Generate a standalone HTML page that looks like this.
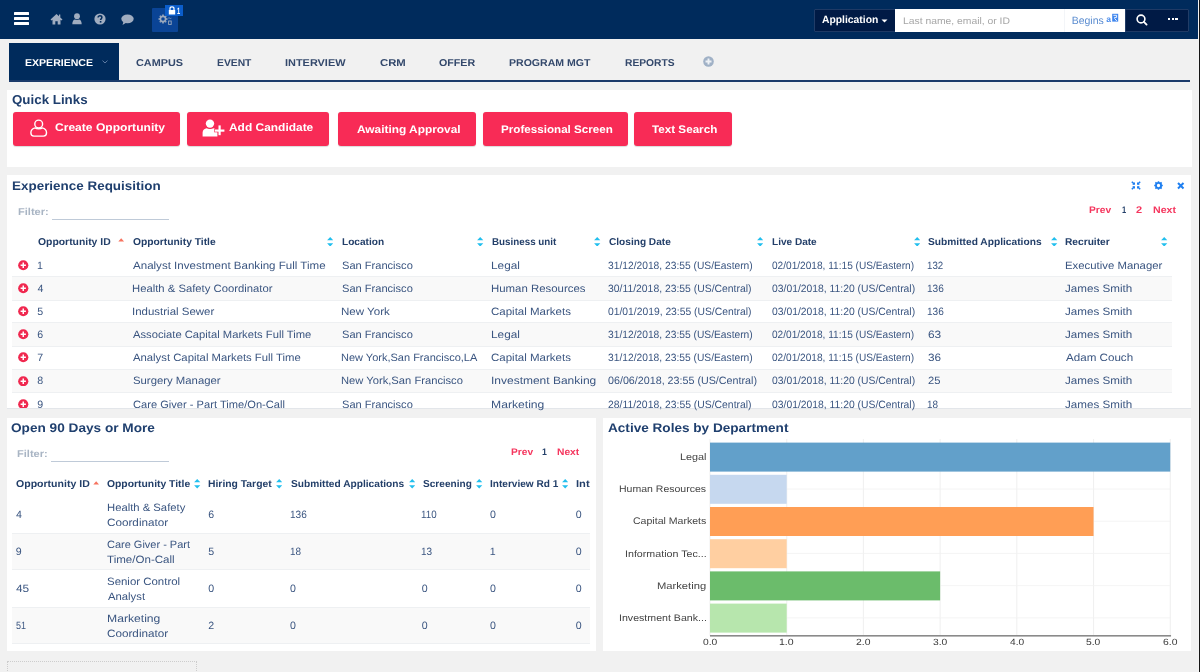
<!DOCTYPE html><html><head><meta charset="utf-8"><style>html,body{margin:0;padding:0;width:1200px;height:672px;overflow:hidden;background:#f1f1f1;text-rendering:geometricPrecision;font-family:"Liberation Sans", sans-serif;}</style></head><body><div style="position:absolute;left:0;top:0;width:1200px;height:672px;overflow:hidden;will-change:transform"><div style="position:absolute;left:0;top:0;width:1200px;height:39px;background:#002b5c"></div><div style="position:absolute;left:14px;top:12px;width:15px;height:2.7px;background:#fff;border-radius:0.5px"></div><div style="position:absolute;left:14px;top:17.2px;width:15px;height:2.7px;background:#fff;border-radius:0.5px"></div><div style="position:absolute;left:14px;top:22.3px;width:15px;height:2.7px;background:#fff;border-radius:0.5px"></div><svg style="position:absolute;left:50px;top:13px" width="13" height="12" viewBox="0 0 13 12">
<path d="M6.5 1 L0.5 6.6 L1.6 7.6 L2.5 6.8 V11.5 H5.3 V8.3 H7.7 V11.5 H10.5 V6.8 L11.4 7.6 L12.5 6.6 L10.3 4.5 V1.4 H9 V3.3 Z" fill="#a0adc0"/></svg><svg style="position:absolute;left:72px;top:13px" width="10" height="12" viewBox="0 0 10 12">
<circle cx="5" cy="3.2" r="2.9" fill="#a0adc0"/><path d="M0.3 11.3 C0.3 7.8 1.6 6.6 3 6.4 C3.8 7 6.2 7 7 6.4 C8.4 6.6 9.7 7.8 9.7 11.3 Z" fill="#a0adc0"/></svg><svg style="position:absolute;left:94px;top:13px" width="12" height="12" viewBox="0 0 12 12">
<circle cx="6" cy="6" r="5.6" fill="#a0adc0"/>
<path d="M4.1 4.6 C4.1 3.4 5 2.8 6 2.8 C7.1 2.8 7.9 3.5 7.9 4.5 C7.9 5.6 6.6 5.8 6.6 6.9" stroke="#002b5c" stroke-width="1.5" fill="none"/>
<rect x="5.8" y="8" width="1.6" height="1.6" fill="#002b5c"/></svg><svg style="position:absolute;left:121px;top:14px" width="13" height="12" viewBox="0 0 13 12">
<ellipse cx="6.5" cy="4.8" rx="6.2" ry="4.4" fill="#a0adc0"/><path d="M2.5 7.5 L1.5 11 L5.5 8.6 Z" fill="#a0adc0"/></svg><div style="position:absolute;left:152px;top:8px;width:26px;height:23.5px;background:#0a4496;border-radius:1px"></div><svg style="position:absolute;left:158px;top:13px" width="16" height="13" viewBox="0 0 16 13">
<g fill="none" stroke="#9aa8bd" stroke-width="1.6"><circle cx="5" cy="6" r="2.6"/></g>
<g stroke="#9aa8bd" stroke-width="1.6"><path d="M5 1.5V3 M5 9V10.5 M0.5 6H2 M8 6H9.5 M1.8 2.8L2.8 3.8 M7.2 8.2L8.2 9.2 M8.2 2.8L7.2 3.8 M2.8 8.2L1.8 9.2"/></g>
<rect x="10.6" y="8" width="2.6" height="3.4" fill="none" stroke="#9aa8bd" stroke-width="0.9"/><path d="M10.2 5.2 Q11 4.5 11.8 5.2 T13.4 5.2" stroke="#9aa8bd" stroke-width="0.7" fill="none"/>
</svg><div style="position:absolute;left:165px;top:5px;width:17.5px;height:11px;background:#0b5dca"></div><svg style="position:absolute;left:168px;top:5.5px" width="8" height="9" viewBox="0 0 8 9">
<path d="M2 4 V2.6 C2 1.4 2.8 0.8 4 0.8 C5.2 0.8 6 1.4 6 2.6 V4" stroke="#fff" stroke-width="1.2" fill="none"/>
<rect x="0.8" y="4" width="6.4" height="4.5" fill="#fff"/></svg><div style="position:absolute;left:814px;top:9px;width:82px;height:22.5px;background:#001a45;border-radius:2px 0 0 2px;box-shadow:inset 0 0 0 0.8px #2a4670"></div><div style="position:absolute;left:895px;top:9px;width:230px;height:22.5px;background:#fff"></div><div style="position:absolute;left:1063.5px;top:9px;width:0.7px;height:22.5px;background:#f3f5f8"></div><div style="position:absolute;left:1125px;top:9px;width:63.5px;height:22.5px;background:#001a45;border-radius:0 2px 2px 0;box-shadow:inset 0 0 0 0.8px #2a4670"></div><svg style="position:absolute;left:880.5px;top:18.5px" width="7" height="4" viewBox="0 0 7 4"><path d="M0.5 0.5 H6.5 L3.5 3.6 Z" fill="#fff"/></svg><svg style="position:absolute;left:1105.5px;top:13px" width="13" height="10" viewBox="0 0 13 10">
<text x="0.2" y="8.6" font-family="Liberation Sans" font-size="8.6" font-weight="700" fill="#4f8fec">a</text>
<rect x="6.2" y="0.8" width="6" height="7.8" fill="#3f86ee"/>
<path d="M7.4 2.3 H10.6 V4.4 H8.2 M8.4 5.2 L10.8 8" stroke="#fff" stroke-width="0.9" fill="none"/></svg><svg style="position:absolute;left:1135.5px;top:13.5px" width="12" height="12" viewBox="0 0 12 12">
<circle cx="5" cy="5" r="3.9" stroke="#fff" stroke-width="1.6" fill="none"/><path d="M7.9 7.9 L10.6 10.6" stroke="#fff" stroke-width="1.8" stroke-linecap="round"/></svg><div style="position:absolute;left:1168.0px;top:18.3px;width:2.4px;height:2px;background:#fff"></div><div style="position:absolute;left:1171.6px;top:18.3px;width:2.4px;height:2px;background:#fff"></div><div style="position:absolute;left:1175.2px;top:18.3px;width:2.4px;height:2px;background:#fff"></div><div style="position:absolute;left:0;top:39px;width:1198px;height:633px;background:#f1f1f1"></div><div style="position:absolute;left:1198.3px;top:0;width:0.7px;height:672px;background:#f4f4f4"></div><div style="position:absolute;left:1199px;top:0;width:1px;height:672px;background:#161616"></div><div style="position:absolute;left:8.5px;top:43px;width:110.5px;height:38.5px;background:#002b5c"></div><div style="position:absolute;left:8.5px;top:79.6px;width:1181.5px;height:2.4px;background:#1b3a6a"></div><svg style="position:absolute;left:101.5px;top:60px" width="6" height="4" viewBox="0 0 6 4"><path d="M0.5 0.6 L3 3 L5.5 0.6" stroke="#6a86ad" stroke-width="0.9" fill="none"/></svg><svg style="position:absolute;left:702.7px;top:56.2px" width="11" height="11" viewBox="0 0 11 11">
<circle cx="5.5" cy="5.5" r="5.3" fill="#a0b1c6"/><path d="M5.5 2.5V8.5 M2.5 5.5H8.5" stroke="#eef1f5" stroke-width="1.9"/></svg><div style="position:absolute;left:6.7px;top:90px;width:1185px;height:77.3px;background:#fff"></div><div style="position:absolute;left:13.2px;top:111.8px;width:167.20000000000002px;height:34.6px;background:#f82b56;border-radius:3px;box-shadow:0 0.5px 1px rgba(0,0,0,0.15)"></div><div style="position:absolute;left:187px;top:111.8px;width:142.3px;height:34.6px;background:#f82b56;border-radius:3px;box-shadow:0 0.5px 1px rgba(0,0,0,0.15)"></div><div style="position:absolute;left:338px;top:111.8px;width:138.3px;height:34.6px;background:#f82b56;border-radius:3px;box-shadow:0 0.5px 1px rgba(0,0,0,0.15)"></div><div style="position:absolute;left:483px;top:111.8px;width:144.5px;height:34.6px;background:#f82b56;border-radius:3px;box-shadow:0 0.5px 1px rgba(0,0,0,0.15)"></div><div style="position:absolute;left:634.3px;top:111.8px;width:98.20000000000005px;height:34.6px;background:#f82b56;border-radius:3px;box-shadow:0 0.5px 1px rgba(0,0,0,0.15)"></div><svg style="position:absolute;left:30px;top:118.5px" width="18" height="18" viewBox="0 0 18 18">
<circle cx="8.7" cy="5" r="3.9" stroke="#fff" stroke-width="1.4" fill="none"/>
<path d="M5.2 8.9 C3 9.4 0.9 10.9 0.9 13.6 V14.1 C0.9 15.9 2.1 17.1 3.9 17.1 H13.5 C15.3 17.1 16.5 15.9 16.5 14.1 V13.6 C16.5 10.9 14.4 9.4 12.2 8.9 C10.9 10 6.5 10 5.2 8.9 Z" stroke="#fff" stroke-width="1.4" fill="none" stroke-linejoin="round"/></svg><svg style="position:absolute;left:202px;top:118.5px" width="24" height="18" viewBox="0 0 24 18">
<circle cx="8" cy="4.6" r="4.2" fill="#fff"/>
<path d="M0.6 17.6 V13.6 C0.6 10.8 2.8 9.6 4.6 9.2 C6 10.2 10 10.2 11.4 9.2 C13.2 9.6 15.4 10.8 15.4 13.6 V17.6 Z" fill="#fff"/>
<rect x="12.2" y="9.9" width="10.6" height="3.4" fill="#f82b56"/>
<rect x="12.8" y="10.5" width="9.6" height="2.2" fill="#fff"/>
<rect x="16.5" y="6.4" width="2.2" height="9.8" fill="#fff"/>
</svg><div style="position:absolute;left:6.7px;top:175px;width:1184.5px;height:234.2px;background:#fff;overflow:hidden" id="c1"></div><div style="position:absolute;left:51.7px;top:218.6px;width:117.7px;height:0.9px;background:#bfcad8"></div><svg style="position:absolute;left:1131px;top:181px" width="10" height="9" viewBox="0 0 10 9">
<g stroke="#1f7ff0" stroke-width="1.5" fill="none"><path d="M0.8 0.8 L3.3 3.1 M9.2 0.8 L6.7 3.1 M0.8 8.2 L3.3 5.9 M9.2 8.2 L6.7 5.9"/></g>
<g fill="#1f7ff0"><path d="M1.2 3.8 H4 V1 Z M8.8 3.8 H6 V1 Z M1.2 5.2 H4 V8 Z M8.8 5.2 H6 V8 Z"/></g></svg><svg style="position:absolute;left:1154px;top:181px" width="9" height="9" viewBox="0 0 9 9">
<circle cx="4.5" cy="4.5" r="2.6" stroke="#1f7ff0" stroke-width="1.9" fill="none"/>
<g stroke="#1f7ff0" stroke-width="1.5"><path d="M4.5 0.2V2 M4.5 7V8.8 M0.2 4.5H2 M7 4.5H8.8 M1.4 1.4L2.6 2.6 M6.4 6.4L7.6 7.6 M7.6 1.4L6.4 2.6 M2.6 6.4L1.4 7.6"/></g></svg><svg style="position:absolute;left:1177px;top:182px" width="7.5" height="7.5" viewBox="0 0 7.5 7.5">
<path d="M1 1 L6.5 6.5 M6.5 1 L1 6.5" stroke="#1f7ff0" stroke-width="2"/></svg><svg style="position:absolute;left:118.2px;top:237.6px" width="6.4" height="4" viewBox="0 0 6.4 4">
<path d="M0.3 3.6 L3.2 0.3 L6.1 3.6 Z" fill="#f7735f"/></svg><svg style="position:absolute;left:327px;top:236.9px" width="6.4" height="9.4" viewBox="0 0 6.4 9.4">
<path d="M0.1 3.3 L3.2 0 L6.3 3.3 Z M0.1 6.3 L3.2 9.6 L6.3 6.3 Z" fill="#22bfee"/></svg><svg style="position:absolute;left:477.2px;top:236.9px" width="6.4" height="9.4" viewBox="0 0 6.4 9.4">
<path d="M0.1 3.3 L3.2 0 L6.3 3.3 Z M0.1 6.3 L3.2 9.6 L6.3 6.3 Z" fill="#22bfee"/></svg><svg style="position:absolute;left:594.3px;top:236.9px" width="6.4" height="9.4" viewBox="0 0 6.4 9.4">
<path d="M0.1 3.3 L3.2 0 L6.3 3.3 Z M0.1 6.3 L3.2 9.6 L6.3 6.3 Z" fill="#22bfee"/></svg><svg style="position:absolute;left:757px;top:236.9px" width="6.4" height="9.4" viewBox="0 0 6.4 9.4">
<path d="M0.1 3.3 L3.2 0 L6.3 3.3 Z M0.1 6.3 L3.2 9.6 L6.3 6.3 Z" fill="#22bfee"/></svg><svg style="position:absolute;left:913.5px;top:236.9px" width="6.4" height="9.4" viewBox="0 0 6.4 9.4">
<path d="M0.1 3.3 L3.2 0 L6.3 3.3 Z M0.1 6.3 L3.2 9.6 L6.3 6.3 Z" fill="#22bfee"/></svg><svg style="position:absolute;left:1051.2px;top:236.9px" width="6.4" height="9.4" viewBox="0 0 6.4 9.4">
<path d="M0.1 3.3 L3.2 0 L6.3 3.3 Z M0.1 6.3 L3.2 9.6 L6.3 6.3 Z" fill="#22bfee"/></svg><svg style="position:absolute;left:1161.3px;top:236.9px" width="6.4" height="9.4" viewBox="0 0 6.4 9.4">
<path d="M0.1 3.3 L3.2 0 L6.3 3.3 Z M0.1 6.3 L3.2 9.6 L6.3 6.3 Z" fill="#22bfee"/></svg><svg style="position:absolute;left:18px;top:260.0px" width="10.5" height="10.5" viewBox="0 0 10.5 10.5">
<circle cx="5.25" cy="5.25" r="5.1" fill="#f0284f"/><path d="M5.25 2.6V7.9 M2.6 5.25H7.9" stroke="#fff" stroke-width="1.45"/></svg><div style="position:absolute;left:12px;top:276.2px;width:1160px;height:24.6px;background:#f9f9f9;border-top:1px solid #eef0f2;border-bottom:1px solid #eef0f2;box-sizing:border-box"></div><svg style="position:absolute;left:18px;top:283.1px" width="10.5" height="10.5" viewBox="0 0 10.5 10.5">
<circle cx="5.25" cy="5.25" r="5.1" fill="#f0284f"/><path d="M5.25 2.6V7.9 M2.6 5.25H7.9" stroke="#fff" stroke-width="1.45"/></svg><svg style="position:absolute;left:18px;top:306.2px" width="10.5" height="10.5" viewBox="0 0 10.5 10.5">
<circle cx="5.25" cy="5.25" r="5.1" fill="#f0284f"/><path d="M5.25 2.6V7.9 M2.6 5.25H7.9" stroke="#fff" stroke-width="1.45"/></svg><div style="position:absolute;left:12px;top:322.4px;width:1160px;height:24.6px;background:#f9f9f9;border-top:1px solid #eef0f2;border-bottom:1px solid #eef0f2;box-sizing:border-box"></div><svg style="position:absolute;left:18px;top:329.3px" width="10.5" height="10.5" viewBox="0 0 10.5 10.5">
<circle cx="5.25" cy="5.25" r="5.1" fill="#f0284f"/><path d="M5.25 2.6V7.9 M2.6 5.25H7.9" stroke="#fff" stroke-width="1.45"/></svg><svg style="position:absolute;left:18px;top:352.40000000000003px" width="10.5" height="10.5" viewBox="0 0 10.5 10.5">
<circle cx="5.25" cy="5.25" r="5.1" fill="#f0284f"/><path d="M5.25 2.6V7.9 M2.6 5.25H7.9" stroke="#fff" stroke-width="1.45"/></svg><div style="position:absolute;left:12px;top:368.6px;width:1160px;height:24.6px;background:#f9f9f9;border-top:1px solid #eef0f2;border-bottom:1px solid #eef0f2;box-sizing:border-box"></div><svg style="position:absolute;left:18px;top:375.5px" width="10.5" height="10.5" viewBox="0 0 10.5 10.5">
<circle cx="5.25" cy="5.25" r="5.1" fill="#f0284f"/><path d="M5.25 2.6V7.9 M2.6 5.25H7.9" stroke="#fff" stroke-width="1.45"/></svg><svg style="position:absolute;left:18px;top:398.6px" width="10.5" height="10.5" viewBox="0 0 10.5 10.5">
<circle cx="5.25" cy="5.25" r="5.1" fill="#f0284f"/><path d="M5.25 2.6V7.9 M2.6 5.25H7.9" stroke="#fff" stroke-width="1.45"/></svg><div style="position:absolute;left:0;top:409.2px;width:1198px;height:8.7px;background:#f1f1f1"></div><div style="position:absolute;left:6.7px;top:408.4px;width:1184.5px;height:0.8px;background:#e3e6ea"></div><div style="position:absolute;left:6.7px;top:418px;width:589.3px;height:232.7px;background:#fff"></div><div style="position:absolute;left:51.3px;top:461.3px;width:118px;height:0.9px;background:#bfcad8"></div><svg style="position:absolute;left:93px;top:481px" width="6.4" height="4" viewBox="0 0 6.4 4">
<path d="M0.3 3.6 L3.2 0.3 L6.1 3.6 Z" fill="#f7735f"/></svg><svg style="position:absolute;left:194.4px;top:479.3px" width="6.4" height="9.4" viewBox="0 0 6.4 9.4">
<path d="M0.1 3.3 L3.2 0 L6.3 3.3 Z M0.1 6.3 L3.2 9.6 L6.3 6.3 Z" fill="#22bfee"/></svg><svg style="position:absolute;left:276px;top:479.3px" width="6.4" height="9.4" viewBox="0 0 6.4 9.4">
<path d="M0.1 3.3 L3.2 0 L6.3 3.3 Z M0.1 6.3 L3.2 9.6 L6.3 6.3 Z" fill="#22bfee"/></svg><svg style="position:absolute;left:408.6px;top:479.3px" width="6.4" height="9.4" viewBox="0 0 6.4 9.4">
<path d="M0.1 3.3 L3.2 0 L6.3 3.3 Z M0.1 6.3 L3.2 9.6 L6.3 6.3 Z" fill="#22bfee"/></svg><svg style="position:absolute;left:476.3px;top:479.3px" width="6.4" height="9.4" viewBox="0 0 6.4 9.4">
<path d="M0.1 3.3 L3.2 0 L6.3 3.3 Z M0.1 6.3 L3.2 9.6 L6.3 6.3 Z" fill="#22bfee"/></svg><svg style="position:absolute;left:562px;top:479.3px" width="6.4" height="9.4" viewBox="0 0 6.4 9.4">
<path d="M0.1 3.3 L3.2 0 L6.3 3.3 Z M0.1 6.3 L3.2 9.6 L6.3 6.3 Z" fill="#22bfee"/></svg><div style="position:absolute;left:11.7px;top:533.07px;width:578px;height:36.97px;background:#f9f9f9;border-top:1px solid #eef0f2;border-bottom:1px solid #eef0f2;box-sizing:border-box"></div><div style="position:absolute;left:11.7px;top:607.01px;width:578px;height:36.97px;background:#f9f9f9;border-top:1px solid #eef0f2;border-bottom:1px solid #eef0f2;box-sizing:border-box"></div><div style="position:absolute;left:11.7px;top:643.4px;width:578px;height:1px;background:#eef0f2"></div><div style="position:absolute;left:6.8px;top:660.5px;width:190.7px;height:20px;border:1px dotted #cdcdcd;box-sizing:border-box"></div><div style="position:absolute;left:602.5px;top:417.7px;width:588.8px;height:233px;background:#fff"></div><svg style="position:absolute;left:600px;top:0" width="600" height="672" viewBox="0 0 600 672"><line x1="110.0" y1="439" x2="110.0" y2="636" stroke="#ebebeb" stroke-width="0.8"/><line x1="186.70833333333337" y1="439" x2="186.70833333333337" y2="636" stroke="#ebebeb" stroke-width="0.8"/><line x1="263.41666666666663" y1="439" x2="263.41666666666663" y2="636" stroke="#ebebeb" stroke-width="0.8"/><line x1="340.125" y1="439" x2="340.125" y2="636" stroke="#ebebeb" stroke-width="0.8"/><line x1="416.83333333333326" y1="439" x2="416.83333333333326" y2="636" stroke="#ebebeb" stroke-width="0.8"/><line x1="493.5416666666665" y1="439" x2="493.5416666666665" y2="636" stroke="#ebebeb" stroke-width="0.8"/><line x1="570.25" y1="439" x2="570.25" y2="636" stroke="#ebebeb" stroke-width="0.8"/><line x1="110" y1="456.8" x2="570.25" y2="456.8" stroke="#f1f1f1" stroke-width="0.8"/><line x1="110" y1="489.0" x2="570.25" y2="489.0" stroke="#f1f1f1" stroke-width="0.8"/><line x1="110" y1="521.2" x2="570.25" y2="521.2" stroke="#f1f1f1" stroke-width="0.8"/><line x1="110" y1="553.4" x2="570.25" y2="553.4" stroke="#f1f1f1" stroke-width="0.8"/><line x1="110" y1="585.6" x2="570.25" y2="585.6" stroke="#f1f1f1" stroke-width="0.8"/><line x1="110" y1="617.8" x2="570.25" y2="617.8" stroke="#f1f1f1" stroke-width="0.8"/><rect x="110" y="442.6" width="460.25" height="29" fill="#62a0ca"/><rect x="110" y="474.8" width="76.70833333333333" height="29" fill="#c6d8ef"/><rect x="110" y="507.0" width="383.54166666666663" height="29" fill="#ff9e55"/><rect x="110" y="539.2" width="76.70833333333333" height="29" fill="#ffcfa1"/><rect x="110" y="571.4000000000001" width="230.125" height="29" fill="#6bbc6b"/><rect x="110" y="603.6" width="76.70833333333333" height="29" fill="#b7e6ad"/><rect x="110" y="635" width="461.05" height="1.6" fill="#8a8a8a"/></svg><span id="t0" style="position:absolute;left:822.30px;top:15.00px;font-size:10.5px;line-height:10.5px;font-weight:700;color:#ffffff;white-space:nowrap;transform:scaleX(0.9849);transform-origin:0 0;">Application</span><span id="t1" style="position:absolute;left:176.89px;top:7.00px;font-size:9px;line-height:9px;font-weight:700;color:#ffffff;white-space:nowrap;transform:scaleX(0.6279);transform-origin:0 0;">1</span><span id="t2" style="position:absolute;left:903.24px;top:17.00px;font-size:9.5px;line-height:9.5px;font-weight:400;color:#a6a6a6;white-space:nowrap;transform:scaleX(1.0891);transform-origin:0 0;">Last name, email, or ID</span><span id="t3" style="position:absolute;left:1071.70px;top:16.00px;font-size:10.5px;line-height:10.5px;font-weight:400;color:#5a8cd0;white-space:nowrap;">Begins</span><span id="t4" style="position:absolute;left:25.37px;top:59.00px;font-size:10px;line-height:10px;font-weight:700;color:#fff;white-space:nowrap;transform:scaleX(1.0552);transform-origin:0 0;">EXPERIENCE</span><span id="t5" style="position:absolute;left:135.77px;top:59.00px;font-size:10px;line-height:10px;font-weight:700;color:#34496c;white-space:nowrap;transform:scaleX(1.0854);transform-origin:0 0;">CAMPUS</span><span id="t6" style="position:absolute;left:216.88px;top:59.00px;font-size:10px;line-height:10px;font-weight:700;color:#34496c;white-space:nowrap;transform:scaleX(1.0326);transform-origin:0 0;">EVENT</span><span id="t7" style="position:absolute;left:285.24px;top:59.00px;font-size:10px;line-height:10px;font-weight:700;color:#34496c;white-space:nowrap;transform:scaleX(1.0923);transform-origin:0 0;">INTERVIEW</span><span id="t8" style="position:absolute;left:379.55px;top:59.00px;font-size:10px;line-height:10px;font-weight:700;color:#34496c;white-space:nowrap;transform:scaleX(1.1314);transform-origin:0 0;">CRM</span><span id="t9" style="position:absolute;left:438.57px;top:59.00px;font-size:10px;line-height:10px;font-weight:700;color:#34496c;white-space:nowrap;transform:scaleX(1.0670);transform-origin:0 0;">OFFER</span><span id="t10" style="position:absolute;left:508.97px;top:59.00px;font-size:10px;line-height:10px;font-weight:700;color:#34496c;white-space:nowrap;transform:scaleX(1.0547);transform-origin:0 0;">PROGRAM MGT</span><span id="t11" style="position:absolute;left:625.18px;top:59.00px;font-size:10px;line-height:10px;font-weight:700;color:#34496c;white-space:nowrap;transform:scaleX(1.0260);transform-origin:0 0;">REPORTS</span><span id="t12" style="position:absolute;left:11.69px;top:93.00px;font-size:13px;line-height:13px;font-weight:700;color:#1f3f6e;white-space:nowrap;transform:scaleX(1.0253);transform-origin:0 0;">Quick Links</span><span id="t13" style="position:absolute;left:54.76px;top:123.00px;font-size:11px;line-height:11px;font-weight:700;color:#fff;white-space:nowrap;transform:scaleX(1.0971);transform-origin:0 0;">Create Opportunity</span><span id="t14" style="position:absolute;left:229.08px;top:123.00px;font-size:11px;line-height:11px;font-weight:700;color:#fff;white-space:nowrap;transform:scaleX(1.0857);transform-origin:0 0;">Add Candidate</span><span id="t15" style="position:absolute;left:356.78px;top:125.00px;font-size:11px;line-height:11px;font-weight:700;color:#fff;white-space:nowrap;transform:scaleX(1.0796);transform-origin:0 0;">Awaiting Approval</span><span id="t16" style="position:absolute;left:500.56px;top:125.00px;font-size:11px;line-height:11px;font-weight:700;color:#fff;white-space:nowrap;transform:scaleX(1.0579);transform-origin:0 0;">Professional Screen</span><span id="t17" style="position:absolute;left:652.39px;top:125.00px;font-size:11px;line-height:11px;font-weight:700;color:#fff;white-space:nowrap;transform:scaleX(1.0604);transform-origin:0 0;">Text Search</span><span id="t18" style="position:absolute;left:11.84px;top:180.00px;font-size:12.5px;line-height:12.5px;font-weight:700;color:#1f3f6e;white-space:nowrap;transform:scaleX(1.0754);transform-origin:0 0;">Experience Requisition</span><span id="t19" style="position:absolute;left:17.83px;top:208.00px;font-size:10px;line-height:10px;font-weight:700;color:#a9b5c4;white-space:nowrap;transform:scaleX(1.1086);transform-origin:0 0;">Filter:</span><span id="t20" style="position:absolute;left:1089.36px;top:206.00px;font-size:9.6px;line-height:9.6px;font-weight:700;color:#f5365e;white-space:nowrap;transform:scaleX(1.0655);transform-origin:0 0;">Prev</span><span id="t21" style="position:absolute;left:1121.53px;top:206.00px;font-size:9.6px;line-height:9.6px;font-weight:700;color:#233f69;white-space:nowrap;transform:scaleX(0.7778);transform-origin:0 0;">1</span><span id="t22" style="position:absolute;left:1136.46px;top:206.00px;font-size:9.6px;line-height:9.6px;font-weight:700;color:#f5365e;white-space:nowrap;transform:scaleX(1.1489);transform-origin:0 0;">2</span><span id="t23" style="position:absolute;left:1153.34px;top:206.00px;font-size:9.6px;line-height:9.6px;font-weight:700;color:#f5365e;white-space:nowrap;transform:scaleX(1.1039);transform-origin:0 0;">Next</span><span id="t24" style="position:absolute;left:38.28px;top:238.00px;font-size:10px;line-height:10px;font-weight:700;color:#233f69;white-space:nowrap;transform:scaleX(1.0380);transform-origin:0 0;">Opportunity ID</span><span id="t25" style="position:absolute;left:132.59px;top:238.00px;font-size:10px;line-height:10px;font-weight:700;color:#233f69;white-space:nowrap;transform:scaleX(1.0288);transform-origin:0 0;">Opportunity Title</span><span id="t26" style="position:absolute;left:341.69px;top:238.00px;font-size:10px;line-height:10px;font-weight:700;color:#233f69;white-space:nowrap;transform:scaleX(1.0110);transform-origin:0 0;">Location</span><span id="t27" style="position:absolute;left:492.21px;top:238.00px;font-size:10px;line-height:10px;font-weight:700;color:#233f69;white-space:nowrap;transform:scaleX(0.9810);transform-origin:0 0;">Business unit</span><span id="t28" style="position:absolute;left:608.50px;top:238.00px;font-size:10px;line-height:10px;font-weight:700;color:#233f69;white-space:nowrap;transform:scaleX(1.0106);transform-origin:0 0;">Closing Date</span><span id="t29" style="position:absolute;left:772.10px;top:238.00px;font-size:10px;line-height:10px;font-weight:700;color:#233f69;white-space:nowrap;transform:scaleX(1.0046);transform-origin:0 0;">Live Date</span><span id="t30" style="position:absolute;left:928.30px;top:238.00px;font-size:10px;line-height:10px;font-weight:700;color:#233f69;white-space:nowrap;transform:scaleX(1.0206);transform-origin:0 0;">Submitted Applications</span><span id="t31" style="position:absolute;left:1065.39px;top:238.00px;font-size:10px;line-height:10px;font-weight:700;color:#233f69;white-space:nowrap;transform:scaleX(1.0182);transform-origin:0 0;">Recruiter</span><span id="t32" style="position:absolute;left:36.90px;top:261.00px;font-size:10.6px;line-height:10.6px;font-weight:400;color:#3a5580;white-space:nowrap;">1</span><span id="t33" style="position:absolute;left:133.10px;top:261.00px;font-size:10.6px;line-height:10.6px;font-weight:400;color:#3a5580;white-space:nowrap;transform:scaleX(1.0904);transform-origin:0 0;">Analyst Investment Banking Full Time</span><span id="t34" style="position:absolute;left:341.58px;top:261.00px;font-size:10.6px;line-height:10.6px;font-weight:400;color:#3a5580;white-space:nowrap;transform:scaleX(1.0455);transform-origin:0 0;">San Francisco</span><span id="t35" style="position:absolute;left:491.11px;top:261.00px;font-size:10.6px;line-height:10.6px;font-weight:400;color:#3a5580;white-space:nowrap;transform:scaleX(1.1152);transform-origin:0 0;">Legal</span><span id="t36" style="position:absolute;left:608.41px;top:261.00px;font-size:10.6px;line-height:10.6px;font-weight:400;color:#3a5580;white-space:nowrap;transform:scaleX(0.9674);transform-origin:0 0;">31/12/2018, 23:55 (US/Eastern)</span><span id="t37" style="position:absolute;left:771.52px;top:261.00px;font-size:10.6px;line-height:10.6px;font-weight:400;color:#3a5580;white-space:nowrap;transform:scaleX(0.9543);transform-origin:0 0;">02/01/2018, 11:15 (US/Eastern)</span><span id="t38" style="position:absolute;left:927.37px;top:261.00px;font-size:10.6px;line-height:10.6px;font-weight:400;color:#3a5580;white-space:nowrap;transform:scaleX(0.9152);transform-origin:0 0;">132</span><span id="t39" style="position:absolute;left:1064.64px;top:261.00px;font-size:10.6px;line-height:10.6px;font-weight:400;color:#3a5580;white-space:nowrap;transform:scaleX(1.0734);transform-origin:0 0;">Executive Manager</span><span id="t40" style="position:absolute;left:37.50px;top:284.00px;font-size:10.6px;line-height:10.6px;font-weight:400;color:#3a5580;white-space:nowrap;">4</span><span id="t41" style="position:absolute;left:132.25px;top:284.00px;font-size:10.6px;line-height:10.6px;font-weight:400;color:#3a5580;white-space:nowrap;transform:scaleX(1.0645);transform-origin:0 0;">Health &amp; Safety Coordinator</span><span id="t42" style="position:absolute;left:341.58px;top:284.00px;font-size:10.6px;line-height:10.6px;font-weight:400;color:#3a5580;white-space:nowrap;transform:scaleX(1.0455);transform-origin:0 0;">San Francisco</span><span id="t43" style="position:absolute;left:491.14px;top:284.00px;font-size:10.6px;line-height:10.6px;font-weight:400;color:#3a5580;white-space:nowrap;transform:scaleX(1.0775);transform-origin:0 0;">Human Resources</span><span id="t44" style="position:absolute;left:608.41px;top:284.00px;font-size:10.6px;line-height:10.6px;font-weight:400;color:#3a5580;white-space:nowrap;transform:scaleX(0.9794);transform-origin:0 0;">30/11/2018, 23:55 (US/Central)</span><span id="t45" style="position:absolute;left:771.51px;top:284.00px;font-size:10.6px;line-height:10.6px;font-weight:400;color:#3a5580;white-space:nowrap;transform:scaleX(0.9773);transform-origin:0 0;">03/01/2018, 11:20 (US/Central)</span><span id="t46" style="position:absolute;left:927.34px;top:284.00px;font-size:10.6px;line-height:10.6px;font-weight:400;color:#3a5580;white-space:nowrap;transform:scaleX(0.9521);transform-origin:0 0;">136</span><span id="t47" style="position:absolute;left:1065.39px;top:284.00px;font-size:10.6px;line-height:10.6px;font-weight:400;color:#3a5580;white-space:nowrap;transform:scaleX(1.0980);transform-origin:0 0;">James Smith</span><span id="t48" style="position:absolute;left:37.30px;top:307.00px;font-size:10.6px;line-height:10.6px;font-weight:400;color:#3a5580;white-space:nowrap;">5</span><span id="t49" style="position:absolute;left:132.13px;top:307.00px;font-size:10.6px;line-height:10.6px;font-weight:400;color:#3a5580;white-space:nowrap;transform:scaleX(1.0831);transform-origin:0 0;">Industrial Sewer</span><span id="t50" style="position:absolute;left:341.13px;top:307.00px;font-size:10.6px;line-height:10.6px;font-weight:400;color:#3a5580;white-space:nowrap;transform:scaleX(1.0910);transform-origin:0 0;">New York</span><span id="t51" style="position:absolute;left:491.46px;top:307.00px;font-size:10.6px;line-height:10.6px;font-weight:400;color:#3a5580;white-space:nowrap;transform:scaleX(1.0860);transform-origin:0 0;">Capital Markets</span><span id="t52" style="position:absolute;left:608.41px;top:307.00px;font-size:10.6px;line-height:10.6px;font-weight:400;color:#3a5580;white-space:nowrap;transform:scaleX(0.9741);transform-origin:0 0;">01/01/2019, 23:55 (US/Central)</span><span id="t53" style="position:absolute;left:771.51px;top:307.00px;font-size:10.6px;line-height:10.6px;font-weight:400;color:#3a5580;white-space:nowrap;transform:scaleX(0.9773);transform-origin:0 0;">03/01/2018, 11:20 (US/Central)</span><span id="t54" style="position:absolute;left:927.34px;top:307.00px;font-size:10.6px;line-height:10.6px;font-weight:400;color:#3a5580;white-space:nowrap;transform:scaleX(0.9521);transform-origin:0 0;">136</span><span id="t55" style="position:absolute;left:1065.39px;top:307.00px;font-size:10.6px;line-height:10.6px;font-weight:400;color:#3a5580;white-space:nowrap;transform:scaleX(1.0980);transform-origin:0 0;">James Smith</span><span id="t56" style="position:absolute;left:37.20px;top:330.00px;font-size:10.6px;line-height:10.6px;font-weight:400;color:#3a5580;white-space:nowrap;">6</span><span id="t57" style="position:absolute;left:133.10px;top:330.00px;font-size:10.6px;line-height:10.6px;font-weight:400;color:#3a5580;white-space:nowrap;transform:scaleX(1.0590);transform-origin:0 0;">Associate Capital Markets Full Time</span><span id="t58" style="position:absolute;left:341.58px;top:330.00px;font-size:10.6px;line-height:10.6px;font-weight:400;color:#3a5580;white-space:nowrap;transform:scaleX(1.0455);transform-origin:0 0;">San Francisco</span><span id="t59" style="position:absolute;left:491.11px;top:330.00px;font-size:10.6px;line-height:10.6px;font-weight:400;color:#3a5580;white-space:nowrap;transform:scaleX(1.1152);transform-origin:0 0;">Legal</span><span id="t60" style="position:absolute;left:608.41px;top:330.00px;font-size:10.6px;line-height:10.6px;font-weight:400;color:#3a5580;white-space:nowrap;transform:scaleX(0.9674);transform-origin:0 0;">31/12/2018, 23:55 (US/Eastern)</span><span id="t61" style="position:absolute;left:771.52px;top:330.00px;font-size:10.6px;line-height:10.6px;font-weight:400;color:#3a5580;white-space:nowrap;transform:scaleX(0.9543);transform-origin:0 0;">02/01/2018, 11:15 (US/Eastern)</span><span id="t62" style="position:absolute;left:927.54px;top:330.00px;font-size:10.6px;line-height:10.6px;font-weight:400;color:#3a5580;white-space:nowrap;transform:scaleX(1.1198);transform-origin:0 0;">63</span><span id="t63" style="position:absolute;left:1065.39px;top:330.00px;font-size:10.6px;line-height:10.6px;font-weight:400;color:#3a5580;white-space:nowrap;transform:scaleX(1.0980);transform-origin:0 0;">James Smith</span><span id="t64" style="position:absolute;left:37.20px;top:353.00px;font-size:10.6px;line-height:10.6px;font-weight:400;color:#3a5580;white-space:nowrap;">7</span><span id="t65" style="position:absolute;left:133.10px;top:353.00px;font-size:10.6px;line-height:10.6px;font-weight:400;color:#3a5580;white-space:nowrap;transform:scaleX(1.0670);transform-origin:0 0;">Analyst Capital Markets Full Time</span><span id="t66" style="position:absolute;left:341.17px;top:353.00px;font-size:10.6px;line-height:10.6px;font-weight:400;color:#3a5580;white-space:nowrap;transform:scaleX(1.0382);transform-origin:0 0;">New York,San Francisco,LA</span><span id="t67" style="position:absolute;left:491.46px;top:353.00px;font-size:10.6px;line-height:10.6px;font-weight:400;color:#3a5580;white-space:nowrap;transform:scaleX(1.0860);transform-origin:0 0;">Capital Markets</span><span id="t68" style="position:absolute;left:608.41px;top:353.00px;font-size:10.6px;line-height:10.6px;font-weight:400;color:#3a5580;white-space:nowrap;transform:scaleX(0.9674);transform-origin:0 0;">31/12/2018, 23:55 (US/Eastern)</span><span id="t69" style="position:absolute;left:771.52px;top:353.00px;font-size:10.6px;line-height:10.6px;font-weight:400;color:#3a5580;white-space:nowrap;transform:scaleX(0.9543);transform-origin:0 0;">02/01/2018, 11:15 (US/Eastern)</span><span id="t70" style="position:absolute;left:927.66px;top:353.00px;font-size:10.6px;line-height:10.6px;font-weight:400;color:#3a5580;white-space:nowrap;transform:scaleX(1.1096);transform-origin:0 0;">36</span><span id="t71" style="position:absolute;left:1065.50px;top:353.00px;font-size:10.6px;line-height:10.6px;font-weight:400;color:#3a5580;white-space:nowrap;transform:scaleX(1.0959);transform-origin:0 0;">Adam Couch</span><span id="t72" style="position:absolute;left:37.30px;top:376.00px;font-size:10.6px;line-height:10.6px;font-weight:400;color:#3a5580;white-space:nowrap;">8</span><span id="t73" style="position:absolute;left:132.67px;top:376.00px;font-size:10.6px;line-height:10.6px;font-weight:400;color:#3a5580;white-space:nowrap;transform:scaleX(1.0705);transform-origin:0 0;">Surgery Manager</span><span id="t74" style="position:absolute;left:341.16px;top:376.00px;font-size:10.6px;line-height:10.6px;font-weight:400;color:#3a5580;white-space:nowrap;transform:scaleX(1.0561);transform-origin:0 0;">New York,San Francisco</span><span id="t75" style="position:absolute;left:490.98px;top:376.00px;font-size:10.6px;line-height:10.6px;font-weight:400;color:#3a5580;white-space:nowrap;transform:scaleX(1.1310);transform-origin:0 0;">Investment Banking</span><span id="t76" style="position:absolute;left:608.40px;top:376.00px;font-size:10.6px;line-height:10.6px;font-weight:400;color:#3a5580;white-space:nowrap;transform:scaleX(1.0117);transform-origin:0 0;">06/06/2018, 23:55 (US/Central)</span><span id="t77" style="position:absolute;left:771.51px;top:376.00px;font-size:10.6px;line-height:10.6px;font-weight:400;color:#3a5580;white-space:nowrap;transform:scaleX(0.9773);transform-origin:0 0;">03/01/2018, 11:20 (US/Central)</span><span id="t78" style="position:absolute;left:927.57px;top:376.00px;font-size:10.6px;line-height:10.6px;font-weight:400;color:#3a5580;white-space:nowrap;transform:scaleX(1.0555);transform-origin:0 0;">25</span><span id="t79" style="position:absolute;left:1065.39px;top:376.00px;font-size:10.6px;line-height:10.6px;font-weight:400;color:#3a5580;white-space:nowrap;transform:scaleX(1.0980);transform-origin:0 0;">James Smith</span><span id="t80" style="position:absolute;left:37.30px;top:400.00px;font-size:10.6px;line-height:10.6px;font-weight:400;color:#3a5580;white-space:nowrap;">9</span><span id="t81" style="position:absolute;left:132.58px;top:400.00px;font-size:10.6px;line-height:10.6px;font-weight:400;color:#3a5580;white-space:nowrap;transform:scaleX(1.0491);transform-origin:0 0;">Care Giver - Part Time/On-Call</span><span id="t82" style="position:absolute;left:341.58px;top:400.00px;font-size:10.6px;line-height:10.6px;font-weight:400;color:#3a5580;white-space:nowrap;transform:scaleX(1.0455);transform-origin:0 0;">San Francisco</span><span id="t83" style="position:absolute;left:491.08px;top:400.00px;font-size:10.6px;line-height:10.6px;font-weight:400;color:#3a5580;white-space:nowrap;transform:scaleX(1.1474);transform-origin:0 0;">Marketing</span><span id="t84" style="position:absolute;left:608.31px;top:400.00px;font-size:10.6px;line-height:10.6px;font-weight:400;color:#3a5580;white-space:nowrap;transform:scaleX(0.9801);transform-origin:0 0;">28/11/2018, 23:55 (US/Central)</span><span id="t85" style="position:absolute;left:771.51px;top:400.00px;font-size:10.6px;line-height:10.6px;font-weight:400;color:#3a5580;white-space:nowrap;transform:scaleX(0.9773);transform-origin:0 0;">03/01/2018, 11:20 (US/Central)</span><span id="t86" style="position:absolute;left:927.35px;top:400.00px;font-size:10.6px;line-height:10.6px;font-weight:400;color:#3a5580;white-space:nowrap;transform:scaleX(0.9344);transform-origin:0 0;">18</span><span id="t87" style="position:absolute;left:1065.39px;top:400.00px;font-size:10.6px;line-height:10.6px;font-weight:400;color:#3a5580;white-space:nowrap;transform:scaleX(1.0980);transform-origin:0 0;">James Smith</span><span id="t88" style="position:absolute;left:11.35px;top:422.00px;font-size:12.5px;line-height:12.5px;font-weight:700;color:#1f3f6e;white-space:nowrap;transform:scaleX(1.0905);transform-origin:0 0;">Open 90 Days or More</span><span id="t89" style="position:absolute;left:17.23px;top:450.00px;font-size:10px;line-height:10px;font-weight:700;color:#a9b5c4;white-space:nowrap;transform:scaleX(1.1086);transform-origin:0 0;">Filter:</span><span id="t90" style="position:absolute;left:510.66px;top:448.00px;font-size:9.6px;line-height:9.6px;font-weight:700;color:#f5365e;white-space:nowrap;transform:scaleX(1.0606);transform-origin:0 0;">Prev</span><span id="t91" style="position:absolute;left:542.25px;top:448.00px;font-size:9.6px;line-height:9.6px;font-weight:700;color:#233f69;white-space:nowrap;transform:scaleX(0.9111);transform-origin:0 0;">1</span><span id="t92" style="position:absolute;left:557.26px;top:448.00px;font-size:9.6px;line-height:9.6px;font-weight:700;color:#f5365e;white-space:nowrap;transform:scaleX(1.0691);transform-origin:0 0;">Next</span><span id="t93" style="position:absolute;left:15.78px;top:480.00px;font-size:10px;line-height:10px;font-weight:700;color:#233f69;white-space:nowrap;transform:scaleX(1.0539);transform-origin:0 0;">Opportunity ID</span><span id="t94" style="position:absolute;left:107.09px;top:480.00px;font-size:10px;line-height:10px;font-weight:700;color:#233f69;white-space:nowrap;transform:scaleX(1.0351);transform-origin:0 0;">Opportunity Title</span><span id="t95" style="position:absolute;left:208.38px;top:480.00px;font-size:10px;line-height:10px;font-weight:700;color:#233f69;white-space:nowrap;transform:scaleX(1.0353);transform-origin:0 0;">Hiring Target</span><span id="t96" style="position:absolute;left:290.80px;top:480.00px;font-size:10px;line-height:10px;font-weight:700;color:#233f69;white-space:nowrap;transform:scaleX(1.0170);transform-origin:0 0;">Submitted Applications</span><span id="t97" style="position:absolute;left:423.10px;top:480.00px;font-size:10px;line-height:10px;font-weight:700;color:#233f69;white-space:nowrap;transform:scaleX(1.0097);transform-origin:0 0;">Screening</span><span id="t98" style="position:absolute;left:490.19px;top:480.00px;font-size:10px;line-height:10px;font-weight:700;color:#233f69;white-space:nowrap;transform:scaleX(1.0084);transform-origin:0 0;">Interview Rd 1</span><span id="t99" style="position:absolute;left:575.63px;top:480.00px;font-size:10px;line-height:10px;font-weight:700;color:#233f69;white-space:nowrap;transform:scaleX(1.1133);transform-origin:0 0;">Int</span><span id="t100" style="position:absolute;left:16.00px;top:510.00px;font-size:10.6px;line-height:10.6px;font-weight:400;color:#3a5580;white-space:nowrap;">4</span><span id="t101" style="position:absolute;left:106.65px;top:503.00px;font-size:10.6px;line-height:10.6px;font-weight:400;color:#3a5580;white-space:nowrap;transform:scaleX(1.0638);transform-origin:0 0;">Health &amp; Safety</span><span id="t102" style="position:absolute;left:106.95px;top:518.00px;font-size:10.6px;line-height:10.6px;font-weight:400;color:#3a5580;white-space:nowrap;transform:scaleX(1.1049);transform-origin:0 0;">Coordinator</span><span id="t103" style="position:absolute;left:208.20px;top:510.00px;font-size:10.6px;line-height:10.6px;font-weight:400;color:#3a5580;white-space:nowrap;">6</span><span id="t104" style="position:absolute;left:289.54px;top:510.00px;font-size:10.6px;line-height:10.6px;font-weight:400;color:#3a5580;white-space:nowrap;transform:scaleX(0.9521);transform-origin:0 0;">136</span><span id="t105" style="position:absolute;left:421.46px;top:510.00px;font-size:10.6px;line-height:10.6px;font-weight:400;color:#3a5580;white-space:nowrap;transform:scaleX(0.9233);transform-origin:0 0;">110</span><span id="t106" style="position:absolute;left:490.10px;top:510.00px;font-size:10.6px;line-height:10.6px;font-weight:400;color:#3a5580;white-space:nowrap;">0</span><span id="t107" style="position:absolute;left:575.80px;top:510.00px;font-size:10.6px;line-height:10.6px;font-weight:400;color:#3a5580;white-space:nowrap;">0</span><span id="t108" style="position:absolute;left:15.80px;top:547.00px;font-size:10.6px;line-height:10.6px;font-weight:400;color:#3a5580;white-space:nowrap;">9</span><span id="t109" style="position:absolute;left:106.98px;top:540.00px;font-size:10.6px;line-height:10.6px;font-weight:400;color:#3a5580;white-space:nowrap;transform:scaleX(1.0369);transform-origin:0 0;">Care Giver - Part</span><span id="t110" style="position:absolute;left:107.28px;top:555.00px;font-size:10.6px;line-height:10.6px;font-weight:400;color:#3a5580;white-space:nowrap;transform:scaleX(1.0910);transform-origin:0 0;">Time/On-Call</span><span id="t111" style="position:absolute;left:208.30px;top:547.00px;font-size:10.6px;line-height:10.6px;font-weight:400;color:#3a5580;white-space:nowrap;">5</span><span id="t112" style="position:absolute;left:289.55px;top:547.00px;font-size:10.6px;line-height:10.6px;font-weight:400;color:#3a5580;white-space:nowrap;transform:scaleX(0.9344);transform-origin:0 0;">18</span><span id="t113" style="position:absolute;left:421.44px;top:547.00px;font-size:10.6px;line-height:10.6px;font-weight:400;color:#3a5580;white-space:nowrap;transform:scaleX(0.9438);transform-origin:0 0;">13</span><span id="t114" style="position:absolute;left:489.70px;top:547.00px;font-size:10.6px;line-height:10.6px;font-weight:400;color:#3a5580;white-space:nowrap;">1</span><span id="t115" style="position:absolute;left:575.80px;top:547.00px;font-size:10.6px;line-height:10.6px;font-weight:400;color:#3a5580;white-space:nowrap;">0</span><span id="t116" style="position:absolute;left:15.98px;top:584.00px;font-size:10.6px;line-height:10.6px;font-weight:400;color:#3a5580;white-space:nowrap;transform:scaleX(1.1165);transform-origin:0 0;">45</span><span id="t117" style="position:absolute;left:107.07px;top:577.00px;font-size:10.6px;line-height:10.6px;font-weight:400;color:#3a5580;white-space:nowrap;transform:scaleX(1.0794);transform-origin:0 0;">Senior Control</span><span id="t118" style="position:absolute;left:107.50px;top:592.00px;font-size:10.6px;line-height:10.6px;font-weight:400;color:#3a5580;white-space:nowrap;transform:scaleX(1.0658);transform-origin:0 0;">Analyst</span><span id="t119" style="position:absolute;left:208.30px;top:584.00px;font-size:10.6px;line-height:10.6px;font-weight:400;color:#3a5580;white-space:nowrap;">0</span><span id="t120" style="position:absolute;left:289.90px;top:584.00px;font-size:10.6px;line-height:10.6px;font-weight:400;color:#3a5580;white-space:nowrap;">0</span><span id="t121" style="position:absolute;left:421.80px;top:584.00px;font-size:10.6px;line-height:10.6px;font-weight:400;color:#3a5580;white-space:nowrap;">0</span><span id="t122" style="position:absolute;left:490.10px;top:584.00px;font-size:10.6px;line-height:10.6px;font-weight:400;color:#3a5580;white-space:nowrap;">0</span><span id="t123" style="position:absolute;left:575.80px;top:584.00px;font-size:10.6px;line-height:10.6px;font-weight:400;color:#3a5580;white-space:nowrap;">0</span><span id="t124" style="position:absolute;left:15.86px;top:621.00px;font-size:10.6px;line-height:10.6px;font-weight:400;color:#3a5580;white-space:nowrap;transform:scaleX(0.8490);transform-origin:0 0;">51</span><span id="t125" style="position:absolute;left:106.58px;top:614.00px;font-size:10.6px;line-height:10.6px;font-weight:400;color:#3a5580;white-space:nowrap;transform:scaleX(1.1474);transform-origin:0 0;">Marketing</span><span id="t126" style="position:absolute;left:106.95px;top:629.00px;font-size:10.6px;line-height:10.6px;font-weight:400;color:#3a5580;white-space:nowrap;transform:scaleX(1.1049);transform-origin:0 0;">Coordinator</span><span id="t127" style="position:absolute;left:208.20px;top:621.00px;font-size:10.6px;line-height:10.6px;font-weight:400;color:#3a5580;white-space:nowrap;">2</span><span id="t128" style="position:absolute;left:289.90px;top:621.00px;font-size:10.6px;line-height:10.6px;font-weight:400;color:#3a5580;white-space:nowrap;">0</span><span id="t129" style="position:absolute;left:421.80px;top:621.00px;font-size:10.6px;line-height:10.6px;font-weight:400;color:#3a5580;white-space:nowrap;">0</span><span id="t130" style="position:absolute;left:490.10px;top:621.00px;font-size:10.6px;line-height:10.6px;font-weight:400;color:#3a5580;white-space:nowrap;">0</span><span id="t131" style="position:absolute;left:575.80px;top:621.00px;font-size:10.6px;line-height:10.6px;font-weight:400;color:#3a5580;white-space:nowrap;">0</span><span id="t132" style="position:absolute;left:607.97px;top:422.00px;font-size:12.5px;line-height:12.5px;font-weight:700;color:#1f3f6e;white-space:nowrap;transform:scaleX(1.0866);transform-origin:0 0;">Active Roles by Department</span><span id="t133" style="position:absolute;left:680.00px;top:453.00px;font-size:9.5px;line-height:9.5px;font-weight:400;color:#444444;white-space:nowrap;transform:scaleX(1.1398);transform-origin:0 0;">Legal</span><span id="t134" style="position:absolute;left:619.03px;top:485.00px;font-size:9.5px;line-height:9.5px;font-weight:400;color:#444444;white-space:nowrap;transform:scaleX(1.1065);transform-origin:0 0;">Human Resources</span><span id="t135" style="position:absolute;left:632.76px;top:517.00px;font-size:9.5px;line-height:9.5px;font-weight:400;color:#444444;white-space:nowrap;transform:scaleX(1.1110);transform-origin:0 0;">Capital Markets</span><span id="t136" style="position:absolute;left:624.90px;top:550.00px;font-size:9.5px;line-height:9.5px;font-weight:400;color:#444444;white-space:nowrap;transform:scaleX(1.1232);transform-origin:0 0;">Information Tec...</span><span id="t137" style="position:absolute;left:657.38px;top:582.00px;font-size:9.5px;line-height:9.5px;font-weight:400;color:#444444;white-space:nowrap;transform:scaleX(1.1774);transform-origin:0 0;">Marketing</span><span id="t138" style="position:absolute;left:618.91px;top:614.00px;font-size:9.5px;line-height:9.5px;font-weight:400;color:#444444;white-space:nowrap;transform:scaleX(1.1163);transform-origin:0 0;">Investment Bank...</span><span id="t139" style="position:absolute;left:702.86px;top:638.00px;font-size:9px;line-height:9px;font-weight:400;color:#3a3a3a;white-space:nowrap;transform:scaleX(1.1423);transform-origin:0 0;">0.0</span><span id="t140" style="position:absolute;left:779.21px;top:638.00px;font-size:9px;line-height:9px;font-weight:400;color:#3a3a3a;white-space:nowrap;transform:scaleX(1.1718);transform-origin:0 0;">1.0</span><span id="t141" style="position:absolute;left:856.16px;top:638.00px;font-size:9px;line-height:9px;font-weight:400;color:#3a3a3a;white-space:nowrap;transform:scaleX(1.1520);transform-origin:0 0;">2.0</span><span id="t142" style="position:absolute;left:932.98px;top:638.00px;font-size:9px;line-height:9px;font-weight:400;color:#3a3a3a;white-space:nowrap;transform:scaleX(1.1423);transform-origin:0 0;">3.0</span><span id="t143" style="position:absolute;left:1009.81px;top:638.00px;font-size:9px;line-height:9px;font-weight:400;color:#3a3a3a;white-space:nowrap;transform:scaleX(1.1328);transform-origin:0 0;">4.0</span><span id="t144" style="position:absolute;left:1086.40px;top:638.00px;font-size:9px;line-height:9px;font-weight:400;color:#3a3a3a;white-space:nowrap;transform:scaleX(1.1423);transform-origin:0 0;">5.0</span><span id="t145" style="position:absolute;left:1162.99px;top:638.00px;font-size:9px;line-height:9px;font-weight:400;color:#3a3a3a;white-space:nowrap;transform:scaleX(1.1520);transform-origin:0 0;">6.0</span></div></body></html>
